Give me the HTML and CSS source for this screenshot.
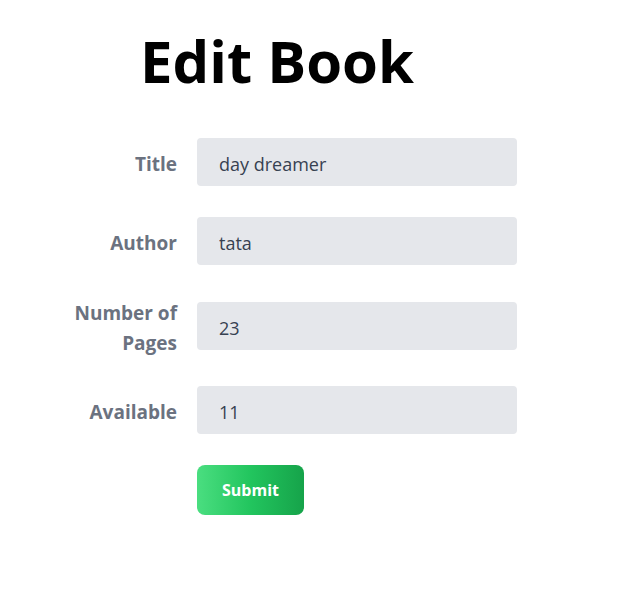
FILE: index.html
```html
<!DOCTYPE html>
<html>
<head>
<meta charset="utf-8">
<link rel="stylesheet" href="styles.css">
</head>
<body>
<div class="page">
  <h1 class="heading">Edit Book</h1>
  <form class="form">
    <div class="row">
      <label class="label">Title</label>
      <div class="field"><input class="input" type="text" value="day dreamer"></div>
    </div>
    <div class="row">
      <label class="label">Author</label>
      <div class="field"><input class="input" type="text" value="tata"></div>
    </div>
    <div class="row">
      <label class="label">Number of Pages</label>
      <div class="field"><input class="input" type="text" value="23"></div>
    </div>
    <div class="row">
      <label class="label">Available</label>
      <div class="field"><input class="input" type="text" value="11"></div>
    </div>
    <div class="row">
      <div class="label"></div>
      <div class="field"><button class="btn" type="button">Submit</button></div>
    </div>
  </form>
</div>
</body>
</html>
```
FILE: styles.css
```css
html, body {
  margin: 0;
  padding: 0;
  background: #ffffff;
}
body {
  font-family: "Open Sans", "Noto Sans", sans-serif;
}
.page {
  width: 480px;
  margin-left: 37px;
  padding-top: 31px;
}
.heading {
  margin: 0 0 47px 0;
  font-size: 58px;
  line-height: 60px;
  font-weight: 700;
  color: #000;
  text-align: center;
}
.form {
  display: flex;
  flex-direction: column;
  gap: 31px;
}
.row {
  display: flex;
  align-items: center;
}
.label {
  width: 160px;
  box-sizing: border-box;
  padding: 3px 20px 0 0;
  margin-bottom: -3px;
  text-align: right;
  font-weight: 700;
  font-size: 19px;
  line-height: 29.5px;
  color: #6b7280;
}
.field {
  width: 320px;
}
.input {
  display: block;
  width: 100%;
  box-sizing: border-box;
  height: 48px;
  padding: 10px 20px 6px 20px;
  border: 2px solid #e5e7eb;
  border-radius: 4px;
  background: #e5e7eb;
  font-family: inherit;
  font-size: 18px;
  line-height: 28px;
  color: #374151;
  outline: none;
}
.btn {
  display: block;
  height: 50px;
  padding: 0 25px;
  border: none;
  border-radius: 8px;
  background: linear-gradient(to right, #4ade80, #22c55e, #16a34a);
  color: #ffffff;
  font-family: inherit;
  font-weight: 700;
  font-size: 16px;
  cursor: pointer;
}
```
